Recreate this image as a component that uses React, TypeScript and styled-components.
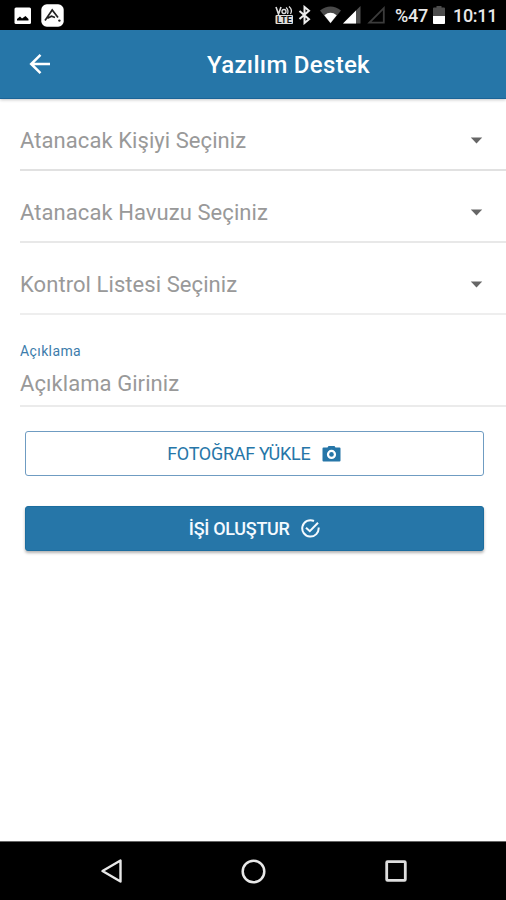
import React from "react";
import styled, { createGlobalStyle } from "styled-components";

const BLUE = "#2676a8";

const GlobalStyle = createGlobalStyle`
  * { box-sizing: border-box; }
  html, body { margin: 0; background: #fff; }
  body { font-family: Roboto, "Liberation Sans", sans-serif; }
`;

const Screen = styled.div`
  width: 506px;
  height: 900px;
  display: flex;
  flex-direction: column;
  background: #fff;
  overflow: hidden;
`;

const StatusBar = styled.header`
  height: 30px;
  flex: none;
  display: flex;
  align-items: center;
  justify-content: space-between;
  padding: 0 10px 0 14px;
  background: #000;
  color: #e8e8e8;
`;

const StatusGroup = styled.div`
  display: flex;
  align-items: center;
  height: 30px;
`;

const Icon = styled.svg<{ $gap?: number }>`
  display: block;
  flex: none;
  margin-left: ${(p) => p.$gap ?? 0}px;
`;

const StatusText = styled.span<{ $gap: number; $width: number }>`
  width: ${(p) => p.$width}px;
  margin-left: ${(p) => p.$gap}px;
  padding-top: 2px;
  font-size: 18px;
  font-weight: 500;
  line-height: 20px;
  letter-spacing: -0.3px;
  white-space: nowrap;
`;

const AppBar = styled.div`
  height: 69px;
  flex: none;
  display: grid;
  grid-template-columns: 71px 1fr 0;
  align-items: center;
  background: ${BLUE};
  border-bottom: 1px solid #1b6497;
  box-shadow: 0 1px 3px rgba(0, 0, 0, 0.22);
  color: #fff;
`;

const BackButton = styled.button`
  display: flex;
  margin: 0;
  padding: 0 0 0 29px;
  border: 0;
  background: none;
  color: inherit;
`;

const Title = styled.h1`
  margin: 0;
  padding-top: 2px;
  font-size: 24px;
  line-height: 30px;
  font-weight: 500;
  text-align: center;
  letter-spacing: 0.3px;
`;

const Form = styled.main`
  flex: 1;
  display: flex;
  flex-direction: column;
`;

const SelectRow = styled.div<{ $line: string }>`
  height: 72px;
  flex: none;
  margin-left: 20px;
  padding: 12px 23px 0 0;
  display: flex;
  align-items: center;
  justify-content: space-between;
  border-bottom: 2px solid ${(p) => p.$line};
`;

const Placeholder = styled.span`
  padding-top: 1px;
  font-size: 22px;
  line-height: 28px;
  letter-spacing: 0.07px;
  color: #999;
`;

const InputRow = styled.div`
  height: 92px;
  flex: none;
  margin-left: 20px;
  padding-top: 28px;
  display: flex;
  flex-direction: column;
  border-bottom: 2px solid #ebebeb;
`;

const FieldLabel = styled.label`
  font-size: 14px;
  line-height: 16px;
  letter-spacing: 0.4px;
  margin-bottom: 10px;
  color: #3d7cab;
`;

const Actions = styled.div`
  display: flex;
  flex-direction: column;
  gap: 30px;
  padding: 24px 22.5px 0 25px;
`;

const ActionButton = styled.button<{ $filled?: boolean }>`
  height: 45px;
  display: flex;
  align-items: center;
  justify-content: center;
  margin: 0;
  padding: 0;
  border: ${(p) => (p.$filled ? "1px solid #1c6d9f" : "1px solid #6f9cc2")};
  border-radius: 3px;
  background: ${(p) => (p.$filled ? BLUE : "#fff")};
  box-shadow: ${(p) => (p.$filled ? "0 2px 3px rgba(0, 0, 0, 0.3)" : "none")};
  color: ${(p) => (p.$filled ? "#f4faff" : BLUE)};
  font-family: inherit;
  font-size: 18px;
  font-weight: ${(p) => (p.$filled ? 500 : 400)};
  letter-spacing: -0.3px;
  line-height: 22px;
`;

const NavBar = styled.nav`
  height: 59px;
  flex: none;
  display: flex;
  align-items: center;
  padding: 0 0 0 100px;
  background: #000;
  border-top: 1px solid #666;
`;

const Caret = () => (
  <Icon width="13" height="7" viewBox="0 0 13 7">
    <path d="M0.8 0.5H12.2L6.5 6.5Z" fill="#666" />
  </Icon>
);

const selects = [
  { text: "Atanacak Kişiyi Seçiniz", line: "#e1e1e1" },
  { text: "Atanacak Havuzu Seçiniz", line: "#e8e8e8" },
  { text: "Kontrol Listesi Seçiniz", line: "#eeeeee" },
];

export default function App() {
  return (
    <>
      <GlobalStyle />
      <Screen>
        <StatusBar>
          <StatusGroup>
            <Icon width="18" height="18" viewBox="0 0 18 18">
              <rect x="0.5" y="1.5" width="16.5" height="16.5" rx="1.5" fill="#fff" />
              <path d="M3 14.5V13L6 10.5L8 12.5L11.5 10L14.5 13V14.5Z" fill="#000" />
            </Icon>
            <Icon $gap={9} width="23" height="23" viewBox="0 0 23 23">
              <rect x="0.3" y="0.3" width="22.4" height="22.4" rx="5.5" fill="#fff" />
              <path d="M4 16.5L11.2 6L17 13.5M6.5 14.2L10.5 12.2L14 13.5" fill="none" stroke="#222" strokeWidth="1.7" />
              <circle cx="18.4" cy="16.6" r="1.2" fill="#222" />
            </Icon>
          </StatusGroup>
          <StatusGroup>
            <Icon width="19" height="20" viewBox="0 0 19 20">
              <path d="M1 2L3.5 9L6 2" fill="none" stroke="#ddd" strokeWidth="1.6" />
              <circle cx="9" cy="6.5" r="2" fill="none" stroke="#ddd" strokeWidth="1.4" />
              <path d="M11 2.5Q14 5 12.5 9M14 1.5Q18 5 15.5 9" fill="none" stroke="#ddd" strokeWidth="1.3" />
              <rect x="0.5" y="10" width="17.5" height="9" rx="1" fill="#ddd" />
              <text x="1.8" y="18" fontSize="9" fontWeight="700" fill="#111" textLength="15">LTE</text>
            </Icon>
            <Icon $gap={4} width="13" height="20" viewBox="0 0 13 20">
              <path d="M1.5 6L11 14.2L6.5 18V2L11 5.8L1.5 14" fill="none" stroke="#eee" strokeWidth="2" />
            </Icon>
            <Icon $gap={9} width="21" height="18" viewBox="0 0 21 18">
              <path d="M0 4.5Q10.5 -3.5 21 4.5L10.5 17.5Z" fill="#4a4a4a" />
              <path d="M4.3 9.2Q10.5 4.5 16.7 9.2L10.5 17Z" fill="#fff" />
            </Icon>
            <Icon $gap={2} width="18" height="18" viewBox="0 0 18 18">
              <path d="M17.5 0V17.5H0Z" fill="#505050" />
              <path d="M13 4.5V17.5H0Z" fill="#fff" />
            </Icon>
            <Icon $gap={6} width="19" height="18" viewBox="0 0 19 18">
              <path d="M16.8 2.2V16.7H2.4Z" fill="none" stroke="#3c3c3c" strokeWidth="1.8" />
            </Icon>
            <StatusText $gap={9} $width={32}>%47</StatusText>
            <Icon $gap={6} width="12" height="18" viewBox="0 0 12 18">
              <path d="M3.5 0H8.5V1.5H11Q12 1.5 12 2.5V17Q12 18 11 18H1Q0 18 0 17V2.5Q0 1.5 1 1.5H3.5Z" fill="#4c4c4c" />
              <path d="M0 10H12V17Q12 18 11 18H1Q0 18 0 17Z" fill="#fff" />
            </Icon>
            <StatusText $gap={8} $width={43}>10:11</StatusText>
          </StatusGroup>
        </StatusBar>
        <AppBar>
          <BackButton aria-label="Geri">
            <Icon width="22" height="22" viewBox="0 0 22 22">
              <path d="M21 11H2.5M11.5 1.8L2.2 11L11.5 20.2" fill="none" stroke="currentColor" strokeWidth="2.5" />
            </Icon>
          </BackButton>
          <Title>Yazılım Destek</Title>
        </AppBar>
        <Form>
          {selects.map((s) => (
            <SelectRow key={s.text} $line={s.line}>
              <Placeholder>{s.text}</Placeholder>
              <Caret />
            </SelectRow>
          ))}
          <InputRow>
            <FieldLabel>Açıklama</FieldLabel>
            <Placeholder>Açıklama Giriniz</Placeholder>
          </InputRow>
          <Actions>
            <ActionButton>
              FOTOĞRAF YÜKLE
              <Icon $gap={12} width="19" height="16" viewBox="0 0 19 16">
                <path fillRule="evenodd" d="M1.5 1.5H5.5L6.5 0H12.5L13.5 1.5H17.5Q18.5 1.5 18.5 2.5V14.5Q18.5 15.5 17.5 15.5H1.5Q0.5 15.5 0.5 14.5V2.5Q0.5 1.5 1.5 1.5ZM9.5 3.8A4.6 4.6 0 1 0 9.5 13A4.6 4.6 0 1 0 9.5 3.8Z" fill="currentColor" />
                <circle cx="9.5" cy="8.4" r="2.3" fill="currentColor" />
              </Icon>
            </ActionButton>
            <ActionButton $filled>
              İŞİ OLUŞTUR
              <Icon $gap={11} width="19" height="19" viewBox="0 0 19 19">
                <path d="M13 2A8.2 8.2 0 1 0 17.6 8.5M5 8.7L8.8 12.2L17 3.7" fill="none" stroke="currentColor" strokeWidth="2" />
              </Icon>
            </ActionButton>
          </Actions>
        </Form>
        <NavBar>
          <Icon width="23" height="26" viewBox="0 0 23 26">
            <path d="M20.5 2.5V23.5L2.5 13Z" fill="none" stroke="#e8e8e8" strokeWidth="2.4" strokeLinejoin="round" />
          </Icon>
          <Icon $gap={118} width="25" height="25" viewBox="0 0 25 25">
            <circle cx="12.5" cy="12.5" r="10.8" fill="none" stroke="#e8e8e8" strokeWidth="2.5" />
          </Icon>
          <Icon $gap={119} width="22" height="22" viewBox="0 0 22 22">
            <rect x="1.7" y="1.7" width="18.6" height="18.6" rx="0.8" fill="none" stroke="#dedede" strokeWidth="2.8" />
          </Icon>
        </NavBar>
      </Screen>
    </>
  );
}
